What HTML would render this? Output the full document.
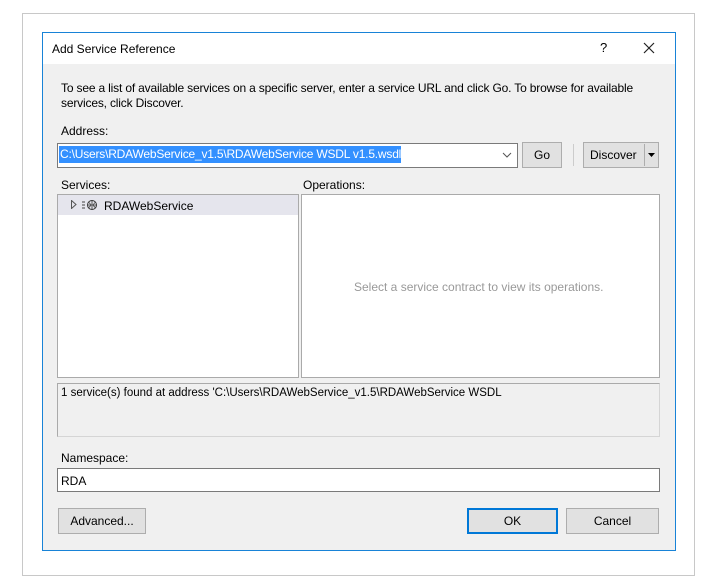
<!DOCTYPE html>
<html><head><meta charset="utf-8"><style>
*{box-sizing:border-box;margin:0;padding:0}
body{width:715px;height:588px;background:#fff;position:relative;font-family:"Liberation Sans",sans-serif;font-size:12px;color:#000;overflow:hidden}
.a{position:absolute;white-space:nowrap}
.btn{position:absolute;background:#e1e1e1;border:1px solid #adadad;text-align:center;line-height:23px}
.box{position:absolute;background:#fff;border:1px solid #acacac}
</style></head><body>
<div class="a" style="left:22px;top:13px;width:673px;height:563px;border:1px solid #c8c8c8"></div>
<div class="a" style="left:42px;top:32px;width:634px;height:519px;border:1px solid #1883d7;background:#f0f0f0"></div>
<div class="a" style="left:43px;top:33px;width:632px;height:31px;background:#fff"></div>
<div class="a" style="left:52px;top:42px">Add Service Reference</div>
<div class="a" style="left:600px;top:40px;font-size:13px">?</div>
<svg class="a" style="left:643px;top:42px" width="12" height="12"><path d="M1 1L11 11M11 1L1 11" stroke="#222" stroke-width="1.2"/></svg>
<div class="a" style="left:61px;top:81px;letter-spacing:-0.17px">To see a list of available services on a specific server, enter a service URL and click Go. To browse for available</div>
<div class="a" style="left:61px;top:96px;letter-spacing:-0.17px">services, click Discover.</div>
<div class="a" style="left:61px;top:124px">Address:</div>
<div class="box" style="left:57px;top:143px;width:461px;height:25px;border-color:#7a7a7a"></div>
<div class="a" style="left:59px;top:146px;width:342px;height:17px;background:#3390ff;color:#fff;line-height:17px;padding-left:1px;font-size:12px;letter-spacing:-0.2px;overflow:hidden">C:\Users\RDAWebService_v1.5\RDAWebService WSDL v1.5.wsdl</div>
<svg class="a" style="left:502px;top:152px" width="10" height="7"><path d="M1 1L5 5L9 1" stroke="#555" fill="none"/></svg>
<div class="btn" style="left:522px;top:142px;width:40px;height:26px;line-height:25px">Go</div>
<div class="a" style="left:573px;top:144px;width:1px;height:22px;background:#ccc"></div>
<div class="btn" style="left:583px;top:142px;width:76px;height:26px;text-align:left;padding-left:6px;line-height:25px">Discover</div>
<div class="a" style="left:644px;top:144px;width:1px;height:22px;background:#adadad"></div>
<svg class="a" style="left:648px;top:153px" width="7" height="4"><path d="M0 0H7L3.5 4Z" fill="#000"/></svg>
<div class="a" style="left:61px;top:178px">Services:</div>
<div class="a" style="left:303px;top:178px">Operations:</div>
<div class="box" style="left:57px;top:194px;width:242px;height:184px;border-color:#aaa"></div>
<div class="a" style="left:58px;top:195px;width:240px;height:20px;background:#e5e5ed"></div>
<svg class="a" style="left:71px;top:200px" width="6" height="9"><path d="M0.5 0.5L5 4.5L0.5 8.5Z" fill="none" stroke="#555"/></svg>
<svg class="a" style="left:82px;top:199px" width="18" height="12"><path d="M0 3H3M0 6H3M0 9H3" stroke="#444"/><circle cx="10" cy="6" r="4.5" fill="none" stroke="#333"/><path d="M5.5 6H14.5M10 1.5V10.5M7 3.5Q10 6 7 8.5M13 3.5Q10 6 13 8.5" stroke="#333" fill="none" stroke-width="0.8"/></svg>
<div class="a" style="left:104px;top:199px">RDAWebService</div>
<div class="box" style="left:301px;top:194px;width:359px;height:184px;border-color:#aaa"></div>
<div class="a" style="left:354px;top:280px;color:#999">Select a service contract to view its operations.</div>
<div class="a" style="left:57px;top:383px;width:603px;height:54px;border:1px solid #d5d5d5;border-left-color:#aaa;border-top-color:#aaa"></div>
<div class="a" style="left:61px;top:387px;font-size:11.5px;letter-spacing:0px">1 service(s) found at address 'C:\Users\RDAWebService_v1.5\RDAWebService WSDL</div>
<div class="a" style="left:61px;top:451px">Namespace:</div>
<div class="box" style="left:57px;top:468px;width:603px;height:24px;border-color:#7a7a7a"></div>
<div class="a" style="left:61px;top:474px">RDA</div>
<div class="btn" style="left:58px;top:508px;width:88px;height:26px;line-height:25px">Advanced...</div>
<div class="btn" style="left:467px;top:508px;width:91px;height:26px;border:2px solid #0078d7;line-height:23px">OK</div>
<div class="btn" style="left:566px;top:508px;width:93px;height:26px;line-height:25px">Cancel</div>
</body></html>
